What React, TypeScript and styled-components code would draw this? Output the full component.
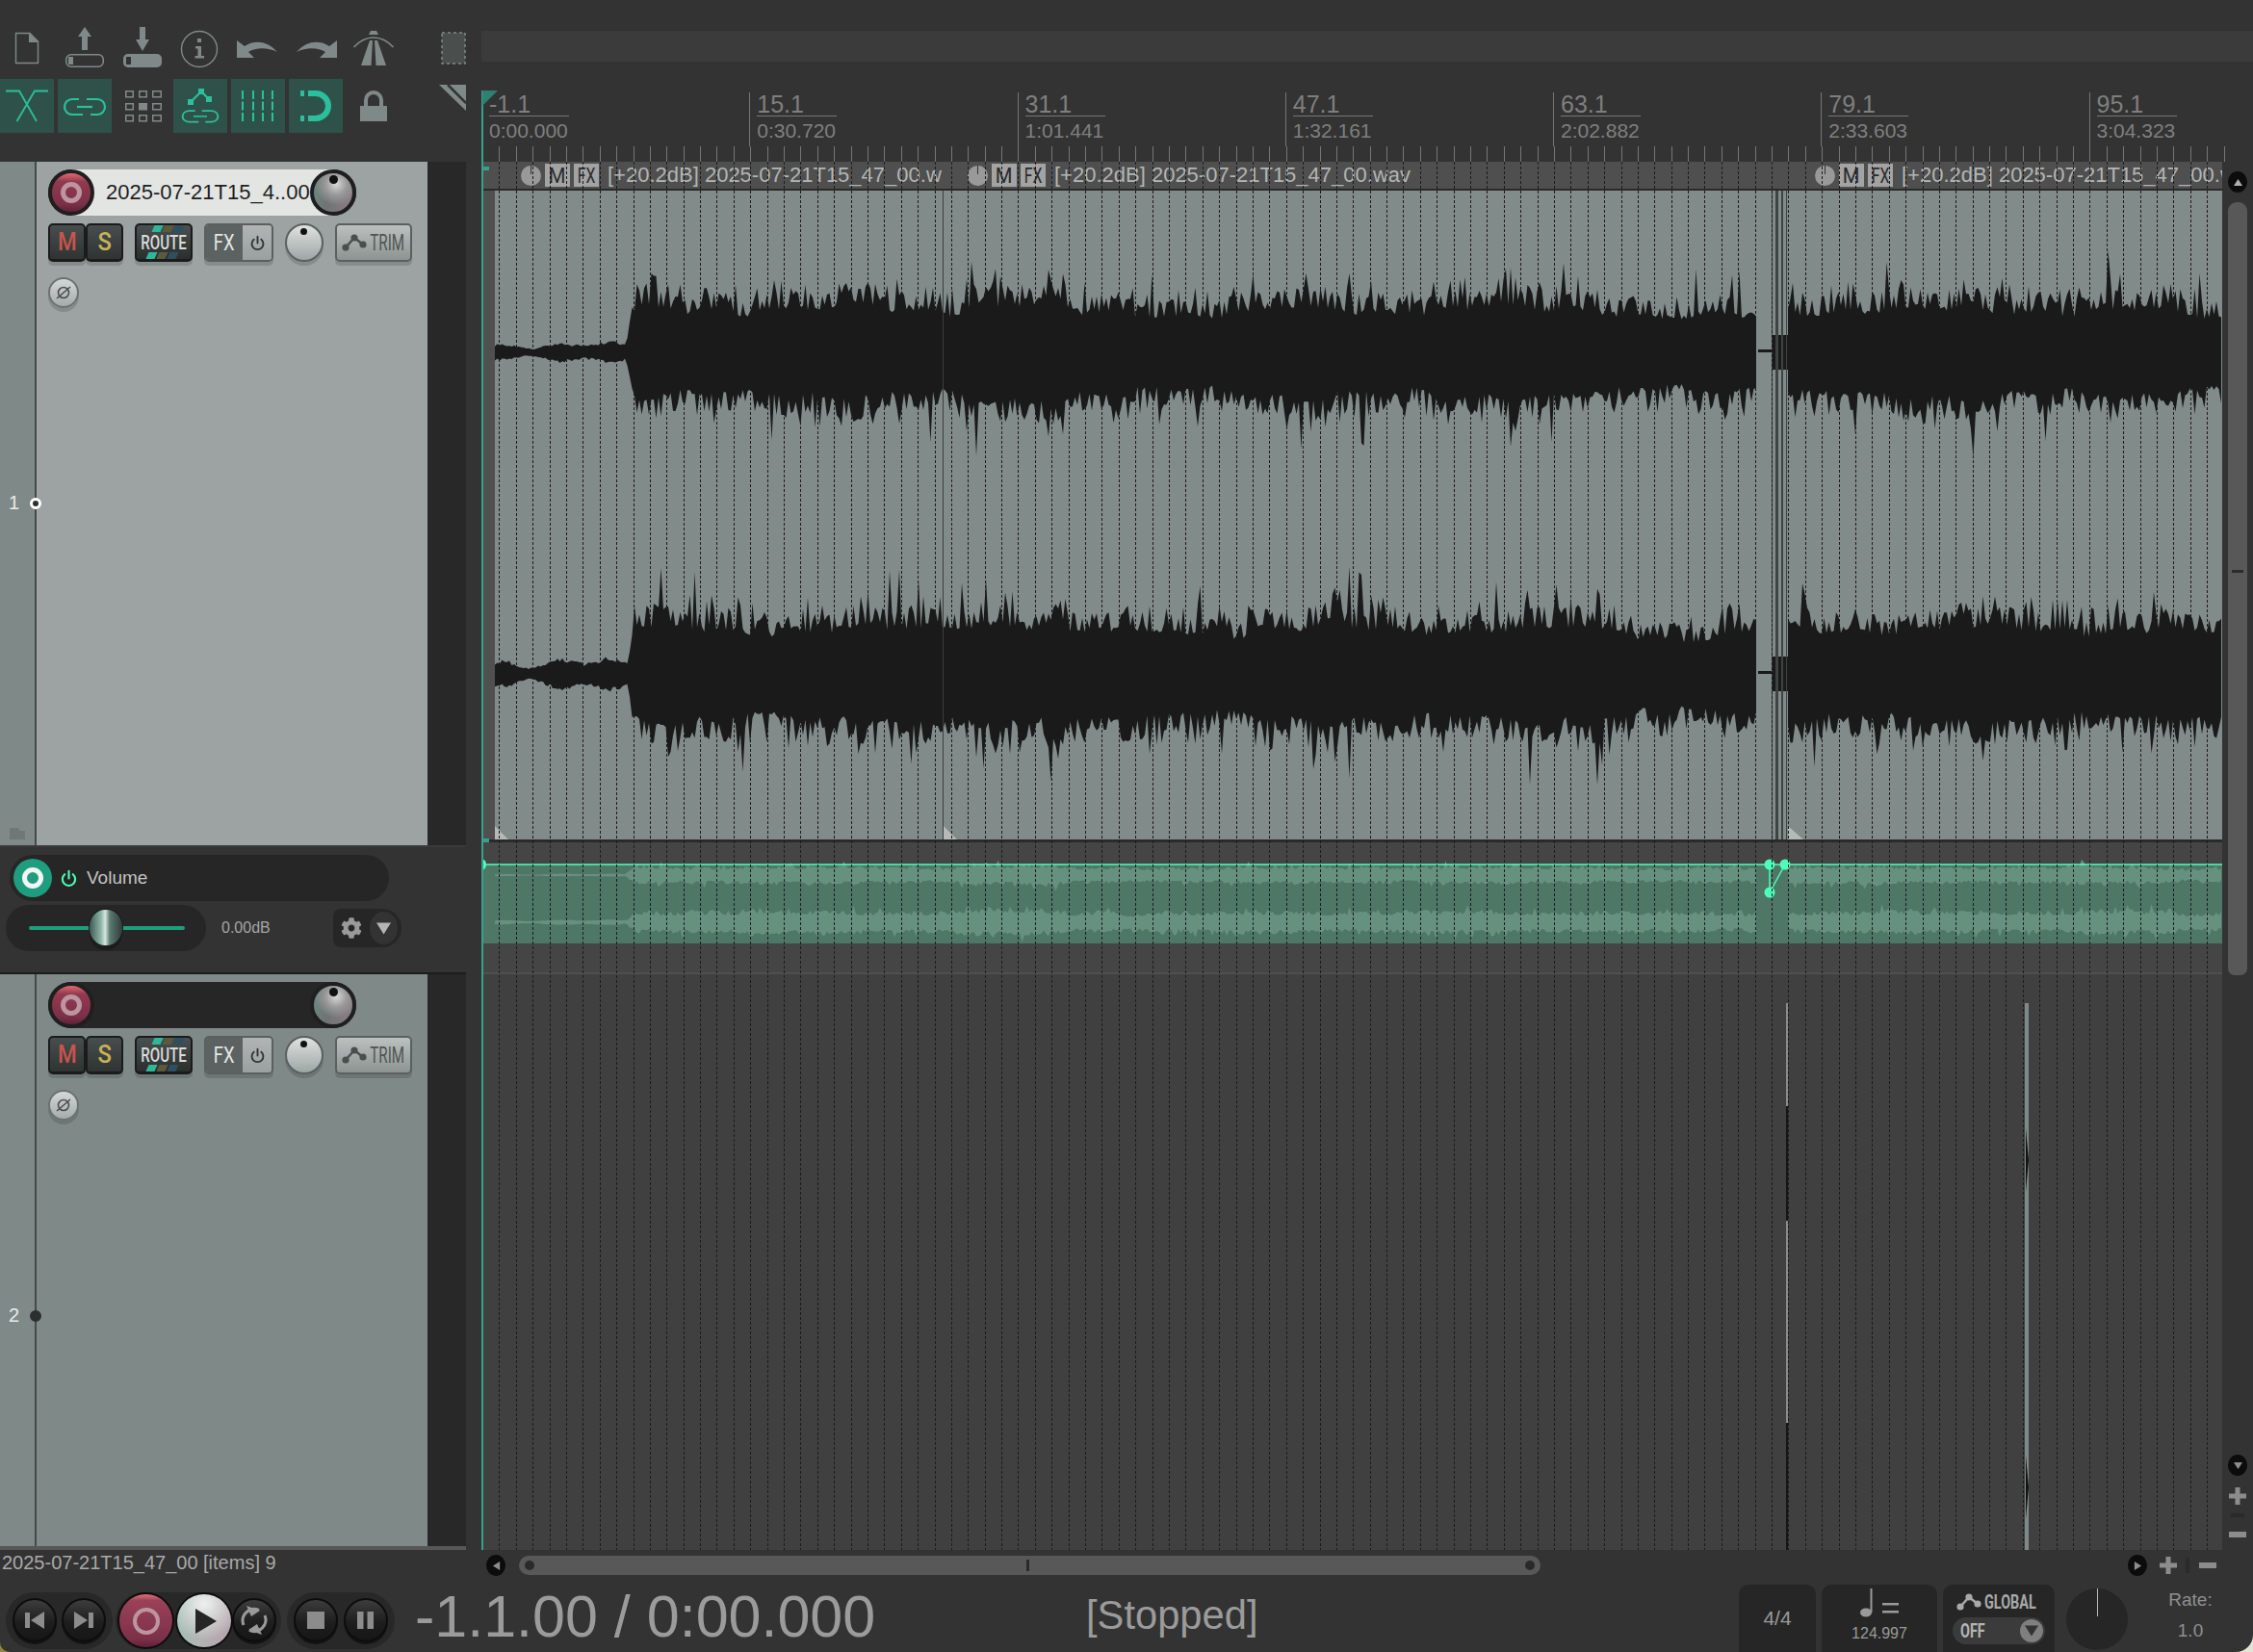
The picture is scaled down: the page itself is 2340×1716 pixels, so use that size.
import React from "react";
import styled, { createGlobalStyle } from "styled-components";
import { FaCog } from "react-icons/fa";

const GlobalStyle = createGlobalStyle`
  html, body {
    margin: 0;
    padding: 0;
    width: 2340px;
    height: 1716px;
    overflow: hidden;
    background: linear-gradient(to right, #8c8a3a 0 30px, #e4e4d6 30px);
    font-family: "Liberation Sans", Arial, sans-serif;
  }
`;

const GREY = "#7f8a88";
const TEAL = "#2bc09d";
const BAR = 17.39;

// ---------- waveform data ----------

function makeRandom(seed: number) {
  let s = seed;
  return () => {
    s = (s * 16807) % 2147483647;
    return s / 2147483647;
  };
}

function loudness(x: number): number {
  if (x < 650) return 7 + 2 * Math.sin(x / 9) + 1.5 * Math.sin(x / 23);
  if (x < 660) return 7 + (x - 650) * 4.5;
  if (x < 1000) return 52;
  if (x < 1070) return 60;
  if (x < 1108) return 56;
  if (x < 1300) return 48;
  if (x < 1700) return 52;
  if (x < 1826) return 44;
  if (x < 2260) return 52;
  return 44;
}

function channelPath(center: number, seed: number, scale: number, quiet: number, from: number, to: number, origin: number) {
  const rand = makeRandom(seed);
  const edge = (x: number) => {
    const base = loudness(x);
    if (x < 650) return base * quiet * (0.8 + rand() * 0.4);
    const slow = 4 * Math.sin(x / 37 + seed) + 3 * Math.sin(x / 11 + seed);
    const n = rand();
    let a = base + slow;
    if (n > 0.975) a *= 1.6 + rand() * 0.35;
    else if (n > 0.87) a *= 1.3 + rand() * 0.2;
    else if (n > 0.42) a *= 1.05 + rand() * 0.2;
    else a *= 0.8 + rand() * 0.15;
    return a;
  };
  const top: string[] = [];
  const bottom: string[] = [];
  for (let x = from; x <= to; x += 2.5) {
    top.push(`${(x - origin).toFixed(1)} ${(center - edge(x) * scale).toFixed(1)}`);
    bottom.push(`${(x - origin).toFixed(1)} ${(center + edge(x) * scale).toFixed(1)}`);
  }
  return `M${top.join("L")}L${bottom.reverse().join("L")}Z`;
}

const BODY_X = 514;
const mainWave = [
  channelPath(168, 7411, 1, 1, 514, 1826, BODY_X),
  channelPath(168, 9127, 1, 1, 1857, 2308, BODY_X),
  channelPath(502, 3313, 1.05, 1.5, 514, 1826, BODY_X),
  channelPath(502, 5519, 1.05, 1.5, 1857, 2308, BODY_X),
].join("");
const ENV_X = 501;
const envWave = [
  channelPath(11, 211, 0.14, 1, 514, 1826, ENV_X),
  channelPath(11, 823, 0.14, 1, 1857, 2308, ENV_X),
  channelPath(60, 1607, 0.18, 1.5, 514, 1826, ENV_X),
  channelPath(60, 4001, 0.18, 1.5, 1857, 2308, ENV_X),
].join("");

const gridXs: number[] = [];
for (let k = 0; k < 105; k++) gridXs.push(Math.round(1 + k * BAR) + 0.5);

// ---------- layout ----------

const Window = styled.div`
  position: relative;
  width: 2340px;
  height: 1716px;
  display: grid;
  grid-template-columns: 2340px;
  grid-template-rows: 168px 1442px 106px;
  background: #333333;
  border-radius: 0 0 18px 10px;
  overflow: hidden;
  color: #9b9b9b;
`;

const TopRow = styled.div`
  display: grid;
  grid-template-columns: 500px 1840px;
`;

const ToolbarArea = styled.div`
  width: 484px;
  display: flex;
  flex-direction: column;
  padding-top: 27px;
  gap: 11px;
`;

const ToolRow = styled.div<{ $h: number }>`
  display: flex;
  gap: 4px;
  height: ${(p) => p.$h}px;
`;

const ToolCell = styled.div<{ $active?: boolean }>`
  width: 56px;
  height: 100%;
  background: ${(p) => (p.$active ? "#2e5249" : "transparent")};
  svg {
    display: block;
  }
`;

const ToolEnd = styled.div`
  margin-left: auto;
  width: 28px;
  svg {
    display: block;
  }
`;

const RulerArea = styled.div`
  position: relative;
  display: flex;
  flex-direction: column;
  padding-top: 32px;
  overflow: hidden;
`;

const TitleStrip = styled.div`
  height: 32px;
  background: #3b3b3b;
  margin-bottom: 32px;
`;

const RulerLabels = styled.div`
  display: flex;
  height: 56px;
`;

const RulerCell = styled.div`
  flex: 0 0 278.25px;
  box-sizing: border-box;
  border-left: 1px solid #767676;
  padding-left: 7px;
  color: #7f7f7f;
`;

const BarLabel = styled.div`
  width: 83px;
  height: 24px;
  font-size: 25px;
  line-height: 25px;
  border-bottom: 1px solid #767676;
`;

const TimeLabel = styled.div`
  font-size: 21px;
  line-height: 24px;
  margin-top: 3px;
`;

const TickRow = styled.svg`
  display: block;
  width: 1840px;
  height: 16px;
`;

const PlayFlag = styled.svg`
  position: absolute;
  left: 0;
  top: 94px;
`;

const RulerPlayhead = styled.div`
  position: absolute;
  left: 0;
  top: 94px;
  bottom: 0;
  width: 2px;
  background: #37a08f;
`;

const BodyRow = styled.div`
  display: grid;
  grid-template-columns: 484px 16px 1808px 32px;
`;

const TrackColumn = styled.div`
  display: flex;
  flex-direction: column;
  height: 1442px;
`;

const TrackRow = styled.div<{ $h: number }>`
  height: ${(p) => p.$h}px;
  display: grid;
  grid-template-columns: 36px 2px 406px 40px;
`;

const Strip = styled.div`
  background: ${GREY};
  position: relative;
  padding: 343px 0 0 9px;
  box-sizing: border-box;
  font-size: 20px;
  line-height: 23px;
  color: #e8ebea;
`;

const StripLine = styled.div`
  background: #454a49;
  position: relative;
`;

const Dot = styled.span<{ $on?: boolean }>`
  position: absolute;
  left: -5px;
  top: 349px;
  width: 12px;
  height: 12px;
  box-sizing: border-box;
  border-radius: 50%;
  background: #2b2f2e;
  border: 3px solid ${(p) => (p.$on ? "#2b2f2e" : "#ffffff")};
`;

const FolderIcon = styled.svg`
  position: absolute;
  left: 10px;
  bottom: 6px;
`;

const TrackPanel = styled.div<{ $selected?: boolean }>`
  background: ${(p) => (p.$selected ? "#9da3a2" : GREY)};
  padding: 8px 0 0 12px;
  display: flex;
  flex-direction: column;
  align-items: flex-start;
`;

const DarkGutter = styled.div`
  background: #282828;
`;

const NameBar = styled.div<{ $light?: boolean }>`
  width: 320px;
  height: 48px;
  display: flex;
  align-items: center;
  border-radius: 24px;
  background: ${(p) => (p.$light ? "linear-gradient(to right, #1f1f1f 0 24px, #e3e5e3 24px 296px, #1f1f1f 296px)" : "#262626")};
`;

const TrackName = styled.div`
  flex: 1;
  padding-left: 12px;
  font-size: 22px;
  color: #1e1e1e;
  white-space: nowrap;
  overflow: hidden;
`;

const RecKnob = styled.div`
  width: 48px;
  height: 48px;
  box-sizing: border-box;
  flex: none;
  border-radius: 50%;
  border: 4px solid #1f1f1f;
  background: linear-gradient(to bottom, #df6a72, #92394f 22%, #7c3049 80%, #5d2238);
  display: flex;
  align-items: center;
  justify-content: center;
  &::before {
    content: "";
    width: 22px;
    height: 22px;
    box-sizing: border-box;
    border-radius: 50%;
    border: 5px solid #bb96a0;
  }
`;

const PanKnob = styled.div`
  position: relative;
  width: 48px;
  height: 48px;
  box-sizing: border-box;
  flex: none;
  border-radius: 50%;
  border: 4px solid #1f1f1f;
  background: radial-gradient(circle at 58% 28%, #d8d8d8 0, #9a9a9a 30%, rgba(130, 130, 130, 0) 60%),
    linear-gradient(100deg, #6a8a82, #6e7373 40%, #8f7d86);
  &::before {
    content: "";
    position: absolute;
    left: 16px;
    top: 2px;
    width: 9px;
    height: 9px;
    border-radius: 50%;
    background: #111;
  }
`;

const ButtonRow = styled.div`
  display: flex;
  gap: 12px;
  margin-top: 8px;
  height: 44px;
`;

const Pair = styled.div`
  display: flex;
`;

const Condensed = styled.span<{ $x?: number }>`
  display: inline-block;
  font-family: Roboto, "Liberation Sans", sans-serif;
  transform: scaleX(${(p) => p.$x ?? 0.8});
`;

const DarkBtn = styled.div<{ $c: string }>`
  width: 39px;
  height: 40px;
  box-sizing: border-box;
  border: 2px solid #1b1b1b;
  border-bottom-width: 3px;
  border-radius: 5px;
  background: linear-gradient(#474e4d, #2f3433);
  color: ${(p) => p.$c};
  font-size: 25px;
  font-weight: 500;
  display: flex;
  align-items: center;
  justify-content: center;
  box-shadow: 0 4px 0 rgba(0, 0, 0, 0.14);
`;

const RouteBtn = styled.div`
  width: 60px;
  height: 40px;
  box-sizing: border-box;
  border: 2px solid #1b1b1b;
  border-bottom-width: 3px;
  border-radius: 5px;
  background: linear-gradient(#4a5150, #2a2e2d);
  display: flex;
  flex-direction: column;
  align-items: center;
  justify-content: space-between;
  overflow: hidden;
  color: #d9dcdb;
  font-size: 21px;
  line-height: 18px;
  font-weight: 500;
  box-shadow: 0 4px 0 rgba(0, 0, 0, 0.14);
`;

const RouteStripes = styled.div<{ $s: number }>`
  display: flex;
  gap: 2px;
  height: 7px;
  flex: none;
  transform: skewX(-24deg) translateX(${(p) => p.$s}px);
`;

const Stripe = styled.span<{ $c: string }>`
  width: 9px;
  background: ${(p) => p.$c};
`;

const FxBtn = styled.div`
  width: 72px;
  height: 40px;
  box-sizing: border-box;
  border: 2px solid #5a5f5f;
  border-radius: 5px;
  display: grid;
  grid-template-columns: 38px 1fr;
  overflow: hidden;
  box-shadow: 0 4px 0 rgba(0, 0, 0, 0.14);
`;

const FxLabel = styled.div`
  background: #5c6261;
  color: #e3e6e5;
  font-size: 23px;
  display: flex;
  align-items: center;
  justify-content: center;
`;

const FxPower = styled.div`
  background: linear-gradient(#b0b5b4, #9aa0a0);
  display: flex;
  align-items: center;
  justify-content: center;
`;

const VolKnob = styled.div`
  position: relative;
  width: 40px;
  height: 40px;
  box-sizing: border-box;
  border: 2px solid #5a5f5f;
  border-radius: 50%;
  background: linear-gradient(#dfe2e1, #9da6a4);
  box-shadow: 0 4px 0 rgba(0, 0, 0, 0.14);
  &::before {
    content: "";
    position: absolute;
    left: 14px;
    top: 3px;
    width: 7px;
    height: 7px;
    border-radius: 50%;
    background: #111;
  }
`;

const TrimBtn = styled.div`
  width: 80px;
  height: 40px;
  box-sizing: border-box;
  border: 2px solid #5a5f5f;
  border-radius: 5px;
  background: linear-gradient(#bcc1c0, #8c9391);
  color: #4f5554;
  font-size: 23px;
  display: flex;
  align-items: center;
  padding-left: 5px;
  box-shadow: 0 4px 0 rgba(0, 0, 0, 0.14);
`;

const PhaseBtn = styled.div`
  margin-top: 12px;
  width: 32px;
  height: 32px;
  box-sizing: border-box;
  border: 2px solid #6b7170;
  border-radius: 50%;
  background: linear-gradient(#d4d8d7, #a4abaa);
  display: flex;
  align-items: center;
  justify-content: center;
  box-shadow: 0 4px 0 rgba(0, 0, 0, 0.14);
`;

// ---------- envelope panel ----------

const EnvPanel = styled.div`
  height: 134px;
  box-sizing: border-box;
  background: #333;
  border-top: 2px solid #3a3a3a;
  border-bottom: 2px solid #1d1d1d;
  padding: 8px 0 0 6px;
  display: flex;
  flex-direction: column;
  gap: 4px;
`;

const EnvTitle = styled.div`
  margin-left: 4px;
  width: 394px;
  height: 48px;
  border-radius: 24px;
  background: #262626;
  display: flex;
  align-items: center;
  padding-left: 4px;
  gap: 8px;
  box-sizing: border-box;
`;

const EnvArm = styled.div`
  width: 40px;
  height: 40px;
  border-radius: 50%;
  background: #1f9d7f;
  display: flex;
  align-items: center;
  justify-content: center;
  &::before {
    content: "";
    width: 22px;
    height: 22px;
    box-sizing: border-box;
    border-radius: 50%;
    border: 5px solid #f2f5f4;
  }
`;

const EnvName = styled.span`
  font-size: 19px;
  color: #c4c4c4;
  margin-left: 1px;
`;

const EnvControls = styled.div`
  display: flex;
  align-items: center;
`;

const FaderPill = styled.div`
  position: relative;
  width: 208px;
  height: 48px;
  border-radius: 24px;
  background: #262626;
  display: flex;
  align-items: center;
  padding: 0 22px 0 24px;
  box-sizing: border-box;
`;

const FaderLine = styled.div`
  height: 4px;
  width: 100%;
  border-radius: 2px;
  background: #1f9d7f;
`;

const FaderThumb = styled.div`
  position: absolute;
  left: 87px;
  top: 5px;
  width: 34px;
  height: 37px;
  border-radius: 48%;
  background: linear-gradient(90deg, #3d5a52 0, #8fb5a9 35%, #d7e5e0 48%, #5b7a71 62%, #2f3c39 100%);
  box-shadow: 0 5px 0 #1c1c1c, 0 0 0 1px #1c1c1c;
`;

const DbText = styled.span`
  font-size: 16px;
  color: #a5a5a5;
  margin-left: 16px;
  width: 116px;
`;

const GearPill = styled.div`
  width: 71px;
  height: 40px;
  border-radius: 8px 20px 20px 8px;
  background: #262626;
  display: flex;
  align-items: center;
  padding-left: 8px;
  box-sizing: border-box;
  gap: 8px;
  color: #9a9a9a;
`;

const ArrowCircle = styled.div`
  width: 29px;
  height: 34px;
  border-radius: 50%;
  background: #333;
  display: flex;
  align-items: center;
  justify-content: center;
`;

const TcpFoot = styled.div`
  height: 4px;
  background: #575757;
`;

// ---------- arrange ----------

const Arrange = styled.div`
  position: relative;
  display: flex;
  flex-direction: column;
  height: 1442px;
  overflow: hidden;
`;

const Playhead = styled.div`
  position: absolute;
  left: 0;
  top: 0;
  bottom: 0;
  width: 2px;
  background: #37a08f;
  z-index: 3;
`;

const PlayMark = styled.div<{ $bottom?: boolean }>`
  position: absolute;
  left: 0;
  ${(p) => (p.$bottom ? "top: 703px;" : "top: 5px;")}
  width: 8px;
  height: 4px;
  background: #37a08f;
  z-index: 3;
`;

const GridOverlay = styled.svg`
  position: absolute;
  left: 0;
  top: 0;
  z-index: 2;
  pointer-events: none;
`;

const ItemLane = styled.div`
  height: 707px;
  padding-left: 2px;
  display: flex;
  flex-direction: column;
  flex: none;
`;

const ItemHeaders = styled.div`
  height: 28px;
  display: flex;
  background: #4f4f4f;
  flex: none;
`;

const ItemHead = styled.div<{ $w: number; $pad: number }>`
  width: ${(p) => p.$w}px;
  padding-left: ${(p) => p.$pad}px;
  box-sizing: border-box;
  display: flex;
  align-items: center;
  overflow: hidden;
  flex: none;
  white-space: nowrap;
  color: #b2b5b4;
  font-size: 22px;
`;

const PieIcon = styled.span`
  position: relative;
  width: 21px;
  height: 21px;
  border-radius: 50%;
  background: #999;
  flex: none;
  margin-right: 4px;
  &::before {
    content: "";
    position: absolute;
    left: 10px;
    top: 0;
    width: 1px;
    height: 9px;
    background: #333;
  }
`;

const ItemTag = styled.span`
  width: 26px;
  height: 24px;
  flex: none;
  background: #a3a3a3;
  color: #2a2a2a;
  font-size: 22px;
  display: flex;
  align-items: center;
  justify-content: center;
  margin-right: 4px;
  overflow: hidden;
`;

const ItemText = styled.span`
  margin-left: 5px;
`;

const ItemBody = styled.div`
  height: 674px;
  flex: none;
  box-sizing: content-box;
  border-top: 2px solid #2a2a2a;
  border-bottom: 3px solid #2a2a2a;
  display: grid;
  grid-template-columns: 12px 1fr;
  background: #818b89;
  svg {
    display: block;
  }
`;

const ItemEdge = styled.div`
  background: #505050;
`;

const EnvLane = styled.div`
  height: 137px;
  box-sizing: border-box;
  flex: none;
  background: #454545;
  padding-top: 23px;
  border-bottom: 2px solid #4f4f4f;
`;

const EnvItem = styled.div`
  height: 82px;
  background: #4f7766;
  margin-left: 1px;
  svg {
    display: block;
    overflow: visible;
  }
`;

const EmptyLane = styled.div`
  flex: 1;
  background: #404040;
  svg {
    display: block;
  }
`;

// ---------- vertical scroll ----------

const VScroll = styled.div`
  display: flex;
  flex-direction: column;
  align-items: center;
  padding: 10px 0 13px;
  box-sizing: border-box;
  height: 1442px;
`;

const RoundBtn = styled.div`
  width: 20px;
  height: 22px;
  flex: none;
  border-radius: 50%;
  background: #0c0c0c;
  display: flex;
  align-items: center;
  justify-content: center;
`;

const VThumb = styled.div`
  position: relative;
  width: 20px;
  height: 803px;
  margin-top: 10px;
  background: #585858;
  border-radius: 9px 9px 7px 7px;
  &::after {
    content: "";
    position: absolute;
    left: 4px;
    right: 4px;
    top: 382px;
    height: 3px;
    background: #2c2c2c;
  }
`;

const ZoomStack = styled.div`
  margin-top: auto;
  display: flex;
  flex-direction: column;
  align-items: center;
  gap: 12px;
  svg {
    display: block;
  }
`;

const ZoomGap = styled.div`
  width: 14px;
  height: 4px;
  margin: -3px 0 3px;
  background: #2a2a2a;
`;

// ---------- footer ----------

const Footer = styled.div`
  display: flex;
  flex-direction: column;
  height: 106px;
`;

const ScrollRow = styled.div`
  height: 36px;
  flex: none;
  display: flex;
  align-items: center;
  padding-bottom: 4px;
  box-sizing: border-box;
`;

const StatusText = styled.div`
  width: 505px;
  flex: none;
  padding-left: 2px;
  box-sizing: border-box;
  font-size: 20px;
  color: #a9a9a9;
  white-space: nowrap;
  margin-top: -6px;
`;

const HThumb = styled.div`
  position: relative;
  margin-left: 14px;
  width: 1061px;
  height: 20px;
  background: #585858;
  border-radius: 10px;
  display: flex;
  align-items: center;
  justify-content: space-between;
  padding: 0 6px;
  box-sizing: border-box;
  &::after {
    content: "";
    position: absolute;
    left: 527px;
    top: 4px;
    width: 3px;
    height: 12px;
    background: #2a2a2a;
  }
`;

const ThumbDot = styled.span`
  width: 10px;
  height: 10px;
  border-radius: 50%;
  background: #2a2a2a;
`;

const HZoom = styled.div`
  margin-left: auto;
  margin-right: 38px;
  display: flex;
  align-items: center;
  gap: 9px;
  svg {
    display: block;
  }
  & > :first-child {
    margin-right: 4px;
  }
`;

const HZoomGap = styled.div`
  width: 4px;
  height: 16px;
  background: #2a2a2a;
  margin-right: 1px;
`;

const TransportRow = styled.div`
  height: 70px;
  flex: none;
  display: flex;
  align-items: flex-start;
  padding-left: 6px;
`;

const TransportPill = styled.div<{ $w: number; $ml: number; $pad: number }>`
  width: ${(p) => p.$w}px;
  margin-left: ${(p) => p.$ml}px;
  margin-top: 8px;
  height: 59px;
  border-radius: 30px;
  padding-left: ${(p) => p.$pad}px;
  box-sizing: border-box;
  background: #282828;
  display: flex;
  align-items: center;
  flex: none;
`;

const TransBtn = styled.div<{ $ml?: number }>`
  width: 46px;
  height: 46px;
  box-sizing: border-box;
  flex: none;
  margin-left: ${(p) => p.$ml ?? 0}px;
  margin-top: -2px;
  border-radius: 50%;
  border: 2px solid #0d0d0d;
  background: linear-gradient(#3d3d3d, #1e1e1e 55%, #161616);
  display: flex;
  align-items: center;
  justify-content: center;
  box-shadow: 0 2px 0 #141414;
`;

const BigRec = styled.div`
  width: 59px;
  height: 59px;
  box-sizing: border-box;
  flex: none;
  border-radius: 50%;
  border: 2px solid #0d0d0d;
  background: linear-gradient(#e66f78 0, #9a4257 12%, #7c3049 85%, #5d2238);
  display: flex;
  align-items: center;
  justify-content: center;
  &::before {
    content: "";
    width: 28px;
    height: 28px;
    box-sizing: border-box;
    border-radius: 50%;
    border: 4px solid #bb96a0;
  }
`;

const BigPlay = styled.div`
  width: 60px;
  height: 59px;
  box-sizing: border-box;
  flex: none;
  margin-left: 1px;
  border-radius: 50%;
  border: 2px solid #0d0d0d;
  background: radial-gradient(circle at 50% 18%, #eef0ef 0, rgba(220, 222, 221, 0.6) 40%, transparent 70%),
    linear-gradient(100deg, #9fc2b8, #b3b3b3 50%, #b79fab);
  display: flex;
  align-items: center;
  justify-content: center;
`;

const BigTime = styled.div`
  margin-left: 21px;
  font-size: 61px;
  line-height: 66px;
  color: #9b9b9b;
  white-space: nowrap;
  flex: none;
  width: 697px;
`;

const StateText = styled.div`
  font-size: 41.7px;
  line-height: 64px;
  color: #9b9b9b;
  flex: none;
  width: 678px;
`;

const InfoBox = styled.div<{ $w: number; $ml: number }>`
  width: ${(p) => p.$w}px;
  margin-left: ${(p) => p.$ml}px;
  height: 70px;
  flex: none;
  box-sizing: border-box;
  background: #262626;
  border-radius: 10px 10px 0 0;
  display: flex;
  flex-direction: column;
  align-items: center;
  justify-content: center;
  color: #9a9a9a;
`;

const Small = styled.span<{ $size: number }>`
  font-size: ${(p) => p.$size}px;
`;

const TempoTop = styled.div`
  display: flex;
  align-items: flex-end;
  gap: 9px;
  height: 30px;
  margin-top: 2px;
  svg {
    display: block;
  }
`;

const GlobalTop = styled.div`
  display: flex;
  align-items: center;
  width: 96px;
  height: 26px;
  margin-top: 5px;
  padding-left: 4px;
  box-sizing: border-box;
  color: #a9a9a9;
  font-size: 20px;
  font-weight: 700;
  white-space: nowrap;
  svg {
    flex: none;
  }
`;

const GlobalSelect = styled.div`
  width: 96px;
  height: 28px;
  margin: 3px 0 8px;
  flex: none;
  border-radius: 14px;
  background: #3b3b3b;
  display: flex;
  align-items: center;
  justify-content: space-between;
  padding: 0 2px 0 8px;
  box-sizing: border-box;
  color: #b5b5b5;
  font-size: 20px;
  font-weight: 700;
`;

const SelectArrow = styled.div`
  width: 24px;
  height: 24px;
  border-radius: 50%;
  background: #7f7f7f;
  display: flex;
  align-items: center;
  justify-content: center;
`;

const Dial = styled.div`
  position: relative;
  width: 64px;
  height: 64px;
  margin: 4px 0 0 12px;
  flex: none;
  border-radius: 50%;
  background: #262626;
  &::before {
    content: "";
    position: absolute;
    left: 32px;
    top: 0;
    width: 1px;
    height: 29px;
    background: #b5b5b5;
  }
`;

const RateCol = styled.div`
  width: 130px;
  flex: none;
  display: flex;
  flex-direction: column;
  align-items: center;
  gap: 11px;
  color: #8f8f8f;
  font-size: 19px;
  line-height: 21px;
  padding-top: 5px;
`;

// ---------- icons ----------

const ToolSvg = ({ w = 56, h, children }: { w?: number; h: number; children: React.ReactNode }) => (
  <svg width={w} height={h} viewBox={`0 0 ${w} ${h}`}>
    {children}
  </svg>
);

const Undo = () => <path d="M6 15 L14 21 C24 14 38 15 48 27 C38 22 26 22 18 27 L24 33 H6 Z" fill={GREY} />;

const LinkGlyph = ({ sw = 2.2 }: { sw?: number }) => (
  <g fill="none" stroke={TEAL} strokeWidth={sw}>
    <path d="M22 21 H15 A8 8 0 0 0 15 37 H26" />
    <path d="M30 21 H41 A8 8 0 0 1 41 37 H34" />
    <path d="M20 29 H36" />
  </g>
);

const PowerGlyph = ({ c, size }: { c: string; size: number }) => (
  <svg width={size} height={size} viewBox="0 0 20 20" fill="none" stroke={c} strokeWidth="2.2" strokeLinecap="round">
    <path d="M10 2 V10" />
    <path d="M5.5 5.5 A7 7 0 1 0 14.5 5.5" />
  </svg>
);

const EnvNodes = ({ c, w = 26, h = 18 }: { c: string; w?: number; h?: number }) => (
  <svg width={w} height={h} viewBox="0 0 26 18" style={{ flex: "none" }}>
    <path d="M4 14 L13 4 L22 11" fill="none" stroke={c} strokeWidth="2.4" />
    <circle cx="4" cy="14" r="3.6" fill={c} />
    <circle cx="13" cy="4" r="3.6" fill={c} />
    <circle cx="22" cy="11" r="3.6" fill={c} />
  </svg>
);

const Tri = ({ dir, c = "#8c8c8c", size = 10 }: { dir: "up" | "down" | "left" | "right"; c?: string; size?: number }) => {
  const pts = { up: "5,1 10,9 0,9", down: "0,1 10,1 5,9", left: "9,0 9,10 1,5", right: "1,0 1,10 9,5" }[dir];
  return (
    <svg width={size} height={size} viewBox="0 0 10 10">
      <polygon points={pts} fill={c} />
    </svg>
  );
};

const Plus = () => (
  <svg width="18" height="18" viewBox="0 0 18 18">
    <path d="M6.5 0 H11.5 V6.5 H18 V11.5 H11.5 V18 H6.5 V11.5 H0 V6.5 H6.5 Z" fill="#8c8c8c" />
  </svg>
);

const Minus = () => (
  <svg width="18" height="6" viewBox="0 0 18 6">
    <rect width="18" height="6" fill="#8c8c8c" />
  </svg>
);

// ---------- parts ----------

function Stripes({ shift }: { shift: number }) {
  return (
    <RouteStripes $s={shift}>
      <Stripe $c="#2fb79b" />
      <Stripe $c="#5b5a3f" />
      <Stripe $c="#2d4f60" />
    </RouteStripes>
  );
}

function Track({ name, selected }: { name: string; selected?: boolean }) {
  return (
    <TrackPanel $selected={selected}>
      <NameBar $light={selected}>
        <RecKnob />
        <TrackName>{name}</TrackName>
        <PanKnob />
      </NameBar>
      <ButtonRow>
        <Pair>
          <DarkBtn $c="#c9544e">
            <Condensed $x={0.9}>M</Condensed>
          </DarkBtn>
          <DarkBtn $c="#c9b256">
            <Condensed $x={0.95}>S</Condensed>
          </DarkBtn>
        </Pair>
        <RouteBtn>
          <Stripes shift={4} />
          <Condensed $x={0.72}>ROUTE</Condensed>
          <Stripes shift={-2} />
        </RouteBtn>
        <FxBtn>
          <FxLabel>
            <Condensed>FX</Condensed>
          </FxLabel>
          <FxPower>
            <PowerGlyph c="#333" size={17} />
          </FxPower>
        </FxBtn>
        <VolKnob />
        <TrimBtn>
          <EnvNodes c="#4a4f4e" />
          <Condensed $x={0.66} style={{ marginLeft: -6 }}>
            TRIM
          </Condensed>
        </TrimBtn>
      </ButtonRow>
      <PhaseBtn>
        <svg width="20" height="20" viewBox="0 0 20 20" fill="none" stroke="#4a4f4e" strokeWidth="1.6">
          <circle cx="10" cy="10" r="5.5" />
          <path d="M3 16 L17 4" />
        </svg>
      </PhaseBtn>
    </TrackPanel>
  );
}

function ItemLabel({ w, pad, text }: { w: number; pad: number; text: string }) {
  return (
    <ItemHead $w={w} $pad={pad}>
      <PieIcon />
      <ItemTag>
        <Condensed $x={0.92}>M</Condensed>
      </ItemTag>
      <ItemTag>
        <Condensed $x={0.72}>FX</Condensed>
      </ItemTag>
      <ItemText>{text}</ItemText>
    </ItemHead>
  );
}

const RULER = [
  ["-1.1", "0:00.000"],
  ["15.1", "0:30.720"],
  ["31.1", "1:01.441"],
  ["47.1", "1:32.161"],
  ["63.1", "2:02.882"],
  ["79.1", "2:33.603"],
  ["95.1", "3:04.323"],
];

export default function App() {
  return (
    <>
      <GlobalStyle />
      <Window>
        <TopRow>
          <ToolbarArea>
            <ToolRow $h={44}>
              <ToolCell>
                <ToolSvg h={44}>
                  <path d="M16.5 7.5 H31 L39.5 16 V38.5 H16.5 Z" fill="none" stroke={GREY} strokeWidth="1.4" />
                  <path d="M30 7 L40 17 H30 Z" fill={GREY} />
                </ToolSvg>
              </ToolCell>
              <ToolCell>
                <ToolSvg h={44}>
                  <path d="M28 1 L35 11 H31 V25 H25 V11 H21 Z" fill={GREY} />
                  <rect x="8.75" y="29.75" width="38.5" height="12.5" rx="5" fill="none" stroke={GREY} strokeWidth="1.5" />
                  <rect x="11" y="32" width="5" height="8" fill={GREY} />
                </ToolSvg>
              </ToolCell>
              <ToolCell>
                <ToolSvg h={44}>
                  <path d="M28 26 L35 14 H31 V1 H25 V14 H21 Z" fill={GREY} />
                  <rect x="8" y="29" width="40" height="14" rx="5" fill={GREY} />
                  <rect x="11" y="32" width="5" height="8" fill="#333" />
                </ToolSvg>
              </ToolCell>
              <ToolCell>
                <ToolSvg h={44}>
                  <circle cx="27" cy="24" r="18.5" fill="none" stroke={GREY} strokeWidth="1.4" />
                  <path d="M25 13 H29 V17 H25 Z M23 21 H29 V31 H32 V33.5 H22.5 V31 H25.5 V23.5 H23 Z" fill={GREY} />
                </ToolSvg>
              </ToolCell>
              <ToolCell>
                <ToolSvg h={44}>
                  <Undo />
                </ToolSvg>
              </ToolCell>
              <ToolCell>
                <ToolSvg h={44}>
                  <g transform="translate(56 0) scale(-1 1)">
                    <Undo />
                  </g>
                </ToolSvg>
              </ToolCell>
              <ToolCell>
                <ToolSvg h={44}>
                  <path d="M25 5 H31 L33 9 H23 Z" fill={GREY} />
                  <path d="M7.5 22 C14 15 22 12 28 12 S42 15 48.5 22" fill="none" stroke={GREY} strokeWidth="1.5" />
                  <path d="M24 15 H27 L25.5 41 H15 Z M29 15 H32 L41 41 H30.5 Z" fill={GREY} />
                </ToolSvg>
              </ToolCell>
              <ToolEnd>
                <ToolSvg w={28} h={44}>
                  <rect x="3" y="7" width="24" height="32" fill="#4a4f4e" stroke={GREY} strokeWidth="1.5" strokeDasharray="3 3" />
                </ToolSvg>
              </ToolEnd>
            </ToolRow>
            <ToolRow $h={56}>
              <ToolCell $active>
                <ToolSvg h={56}>
                  <path d="M6 12.5 H20 L38 44 M50 12.5 H36 L17.5 44" fill="none" stroke={TEAL} strokeWidth="1.8" />
                </ToolSvg>
              </ToolCell>
              <ToolCell $active>
                <ToolSvg h={56}>
                  <LinkGlyph />
                </ToolSvg>
              </ToolCell>
              <ToolCell>
                <ToolSvg h={56}>
                  {[12, 25, 37].map((y) =>
                    [10, 24, 38].map((x) => (
                      <rect
                        key={`${x}-${y}`}
                        x={x + 0.75}
                        y={y + 0.75}
                        width={x === 38 ? 8.5 : 7.5}
                        height={6}
                        fill={x === 24 && y === 25 ? GREY : "none"}
                        stroke={GREY}
                        strokeWidth="1.5"
                      />
                    )),
                  )}
                </ToolSvg>
              </ToolCell>
              <ToolCell $active>
                <ToolSvg h={56}>
                  <path d="M18 24 L29 13 L37 21" fill="none" stroke={TEAL} strokeWidth="2.2" />
                  <rect x="15" y="21" width="6" height="6" fill={TEAL} />
                  <rect x="26" y="10" width="6" height="6" fill={TEAL} />
                  <rect x="34" y="18" width="6" height="6" fill={TEAL} />
                  <g transform="translate(3.5 18) scale(0.875 0.72)">
                    <LinkGlyph sw={2.2} />
                  </g>
                </ToolSvg>
              </ToolCell>
              <ToolCell $active>
                <ToolSvg h={56}>
                  {[12, 23, 33, 43].map((x) => (
                    <line key={x} x1={x} x2={x} y1="12" y2="44" stroke={TEAL} strokeWidth="2" strokeDasharray="9 2.5" />
                  ))}
                </ToolSvg>
              </ToolCell>
              <ToolCell $active>
                <ToolSvg h={56}>
                  <path d="M20 15 H28 A13 13 0 0 1 28 41 H20" fill="none" stroke={TEAL} strokeWidth="6" />
                  <rect x="12" y="12" width="4" height="6" fill={TEAL} />
                  <rect x="12" y="38" width="4" height="6" fill={TEAL} />
                </ToolSvg>
              </ToolCell>
              <ToolCell>
                <ToolSvg h={56}>
                  <path d="M20 28 V22 A8 8 0 0 1 36 22 V28" fill="none" stroke={GREY} strokeWidth="4" />
                  <rect x="14" y="28" width="28" height="16" fill={GREY} />
                </ToolSvg>
              </ToolCell>
              <ToolEnd>
                <ToolSvg w={28} h={56}>
                  <path d="M0 6 H28 V33 Z" fill={GREY} />
                  <path d="M9 6 L28 25" stroke="#333" strokeWidth="2.5" />
                </ToolSvg>
              </ToolEnd>
            </ToolRow>
          </ToolbarArea>
          <RulerArea>
            <TitleStrip />
            <RulerLabels>
              {RULER.map(([bar, time]) => (
                <RulerCell key={bar}>
                  <BarLabel>{bar}</BarLabel>
                  <TimeLabel>{time}</TimeLabel>
                </RulerCell>
              ))}
            </RulerLabels>
            <TickRow viewBox="0 0 1840 16">
              {gridXs.map((x) => (
                <line key={x} x1={x} x2={x} y1="0" y2="16" stroke="#767676" strokeWidth="1" />
              ))}
            </TickRow>
            <RulerPlayhead />
            <PlayFlag width="18" height="16" viewBox="0 0 18 16">
              <path d="M1 0 H17 L1 16 Z" fill="#2f7f72" />
            </PlayFlag>
          </RulerArea>
        </TopRow>

        <BodyRow>
          <TrackColumn>
            <TrackRow $h={710}>
              <Strip>
                1
                <FolderIcon width="16" height="12" viewBox="0 0 16 12">
                  <path d="M0 0 H9 L11 3 H16 V12 H0 Z" fill="#6f7877" />
                </FolderIcon>
              </Strip>
              <StripLine>
                <Dot />
              </StripLine>
              <Track name="2025-07-21T15_4..00" selected />
              <DarkGutter />
            </TrackRow>
            <EnvPanel>
              <EnvTitle>
                <EnvArm />
                <PowerGlyph c="#4dffb8" size={19} />
                <EnvName>Volume</EnvName>
              </EnvTitle>
              <EnvControls>
                <FaderPill>
                  <FaderLine />
                  <FaderThumb />
                </FaderPill>
                <DbText>0.00dB</DbText>
                <GearPill>
                  <FaCog size={22} />
                  <ArrowCircle>
                    <Tri dir="down" c="#b5b5b5" size={15} />
                  </ArrowCircle>
                </GearPill>
              </EnvControls>
            </EnvPanel>
            <TrackRow $h={594}>
              <Strip>2</Strip>
              <StripLine>
                <Dot $on />
              </StripLine>
              <Track name="" />
              <DarkGutter />
            </TrackRow>
            <TcpFoot />
          </TrackColumn>
          <div />
          <Arrange>
            <Playhead />
            <PlayMark />
            <PlayMark $bottom />
            <ItemLane>
              <ItemHeaders>
                <ItemLabel w={477} pad={39} text="[+20.2dB] 2025-07-21T15_47_00.w" />
                <ItemLabel w={878} pad={26} text="[+20.2dB] 2025-07-21T15_47_00.wav" />
                <ItemLabel w={451} pad={28} text="[+20.2dB] 2025-07-21T15_47_00.wav" />
              </ItemHeaders>
              <ItemBody>
                <ItemEdge />
                <svg width="1794" height="674" viewBox="0 0 1794 674">
                  <path d={mainWave} fill="#1a1a1a" />
                  <rect x="1312" y="165" width="14" height="3" fill="#1a1a1a" />
                  <rect x="1312" y="499" width="14" height="3" fill="#1a1a1a" />
                  <rect x="465" y="0" width="1" height="674" fill="#3a3f3e" />
                  <rect x="1326" y="0" width="17" height="674" fill="#818b89" />
                  <rect x="1326" y="150" width="17" height="36" fill="#1a1a1a" />
                  <rect x="1326" y="484" width="17" height="36" fill="#1a1a1a" />
                  {[0, 4, 5, 6, 10, 11, 15].map((o) => (
                    <rect key={o} x={1326 + o} y="0" width="1" height="674" fill="#3f4342" />
                  ))}
                  <path d="M0 660 L14 674 H0 Z M466 660 L480 674 H466 Z M1343 660 L1359 674 H1343 Z" fill="#b5b9b8" />
                </svg>
              </ItemBody>
            </ItemLane>
            <EnvLane>
              <EnvItem>
                <svg width="1807" height="82" viewBox="0 0 1807 82">
                  <path d={envWave} fill="#67917f" />
                  <path d="M0 0 H1807 M1337 0 V29 L1353 0" fill="none" stroke="#4dffb8" strokeWidth="1.5" />
                  <ellipse cx="1337" cy="0" rx="5.5" ry="5.5" fill="#4dffb8" />
                  <ellipse cx="1353" cy="0" rx="5.5" ry="5.5" fill="#4dffb8" />
                  <ellipse cx="1337" cy="29" rx="5.5" ry="5.5" fill="#4dffb8" />
                  <ellipse cx="0" cy="0" rx="4" ry="5.5" fill="#4dffb8" />
                </svg>
              </EnvItem>
            </EnvLane>
            <EmptyLane>
              <svg width="1808" height="598" viewBox="0 0 1808 598">
                <rect x="1355" y="30" width="2" height="107" fill="#8b8b8b" />
                <rect x="1355" y="137" width="2" height="119" fill="#161616" />
                <rect x="1355" y="256" width="2" height="210" fill="#8b8b8b" />
                <rect x="1355" y="466" width="2" height="132" fill="#161616" />
                <rect x="1603" y="30" width="4" height="568" fill={GREY} />
                <path d="M1604 160 L1607 193 L1604 226 Z M1604 500 L1607 533 L1604 566 Z" fill="#111" />
              </svg>
            </EmptyLane>
            <GridOverlay width="1808" height="1442" viewBox="0 0 1808 1442">
              {gridXs.map((x) => (
                <line key={x} x1={x} x2={x} y1="0" y2="1442" stroke="#1b1b1b" strokeWidth="1" strokeDasharray="3 2" />
              ))}
            </GridOverlay>
          </Arrange>
          <VScroll>
            <RoundBtn>
              <Tri dir="up" size={9} c="#b0b0b0" />
            </RoundBtn>
            <VThumb />
            <ZoomStack>
              <RoundBtn>
                <Tri dir="down" size={9} c="#8c8c8c" />
              </RoundBtn>
              <Plus />
              <ZoomGap />
              <Minus />
            </ZoomStack>
          </VScroll>
        </BodyRow>

        <Footer>
          <ScrollRow>
            <StatusText>2025-07-21T15_47_00 [items] 9</StatusText>
            <RoundBtn>
              <Tri dir="left" size={9} />
            </RoundBtn>
            <HThumb>
              <ThumbDot />
              <ThumbDot />
            </HThumb>
            <HZoom>
              <RoundBtn>
                <Tri dir="right" size={9} />
              </RoundBtn>
              <Plus />
              <HZoomGap />
              <Minus />
            </HZoom>
          </ScrollRow>
          <TransportRow>
            <TransportPill $w={111} $ml={0} $pad={7}>
              <TransBtn>
                <svg width="22" height="22" viewBox="0 0 22 22">
                  <path d="M1 3 H6 V19 H1 Z M21 2 V20 L7 11 Z" fill="#8c8c8c" />
                </svg>
              </TransBtn>
              <TransBtn $ml={5}>
                <svg width="22" height="22" viewBox="0 0 22 22">
                  <path d="M21 3 H16 V19 H21 Z M1 2 V20 L15 11 Z" fill="#8c8c8c" />
                </svg>
              </TransBtn>
            </TransportPill>
            <TransportPill $w={172} $ml={3} $pad={2}>
              <BigRec />
              <BigPlay>
                <svg width="28" height="28" viewBox="0 0 28 28" style={{ marginLeft: 4 }}>
                  <path d="M3 1 L25 14 L3 27 Z" fill="#262626" />
                </svg>
              </BigPlay>
              <TransBtn $ml={-1}>
                <svg width="32" height="32" viewBox="0 0 32 32" fill="none" stroke="#9a9a9a" strokeWidth="3">
                  <path d="M5 21 A12 12 0 0 1 21 5.5" />
                  <path d="M27 11 A12 12 0 0 1 11 26.5" />
                  <path d="M8 1 L22 6 L13 12 Z M24 31 L10 26 L19 20 Z" fill="#9a9a9a" stroke="none" />
                </svg>
              </TransBtn>
            </TransportPill>
            <TransportPill $w={112} $ml={6} $pad={7}>
              <TransBtn>
                <svg width="18" height="18" viewBox="0 0 18 18">
                  <rect width="18" height="18" fill="#8c8c8c" />
                </svg>
              </TransBtn>
              <TransBtn $ml={6}>
                <svg width="18" height="18" viewBox="0 0 18 18">
                  <path d="M0 0 H6.5 V18 H0 Z M10.5 0 H17 V18 H10.5 Z" fill="#8c8c8c" />
                </svg>
              </TransBtn>
            </TransportPill>
            <BigTime>-1.1.00 / 0:00.000</BigTime>
            <StateText>[Stopped]</StateText>
            <InfoBox $w={80} $ml={0}>
              <Small $size={21}>4/4</Small>
            </InfoBox>
            <InfoBox $w={120} $ml={6}>
              <TempoTop>
                <svg width="14" height="30" viewBox="0 0 14 30">
                  <ellipse cx="6" cy="25" rx="6" ry="4.5" fill="#9a9a9a" />
                  <rect x="10.5" y="0" width="2" height="25" fill="#9a9a9a" />
                </svg>
                <svg width="17" height="11" viewBox="0 0 17 11" style={{ marginBottom: 4 }}>
                  <path d="M0 0 H17 V2.5 H0 Z M0 8 H17 V10.5 H0 Z" fill="#9a9a9a" />
                </svg>
              </TempoTop>
              <Small $size={16} style={{ marginTop: 8, marginBottom: 8 }}>
                124.997
              </Small>
            </InfoBox>
            <InfoBox $w={116} $ml={6}>
              <GlobalTop>
                <EnvNodes c="#a9a9a9" w={26} h={18} />
                <Condensed $x={0.72} style={{ transformOrigin: "left", marginLeft: 3 }}>
                  GLOBAL
                </Condensed>
              </GlobalTop>
              <GlobalSelect>
                <Condensed $x={0.72} style={{ transformOrigin: "left" }}>
                  OFF
                </Condensed>
                <SelectArrow>
                  <Tri dir="down" c="#333" size={14} />
                </SelectArrow>
              </GlobalSelect>
            </InfoBox>
            <Dial />
            <RateCol>
              <span>Rate:</span>
              <span>1.0</span>
            </RateCol>
          </TransportRow>
        </Footer>
      </Window>
    </>
  );
}
